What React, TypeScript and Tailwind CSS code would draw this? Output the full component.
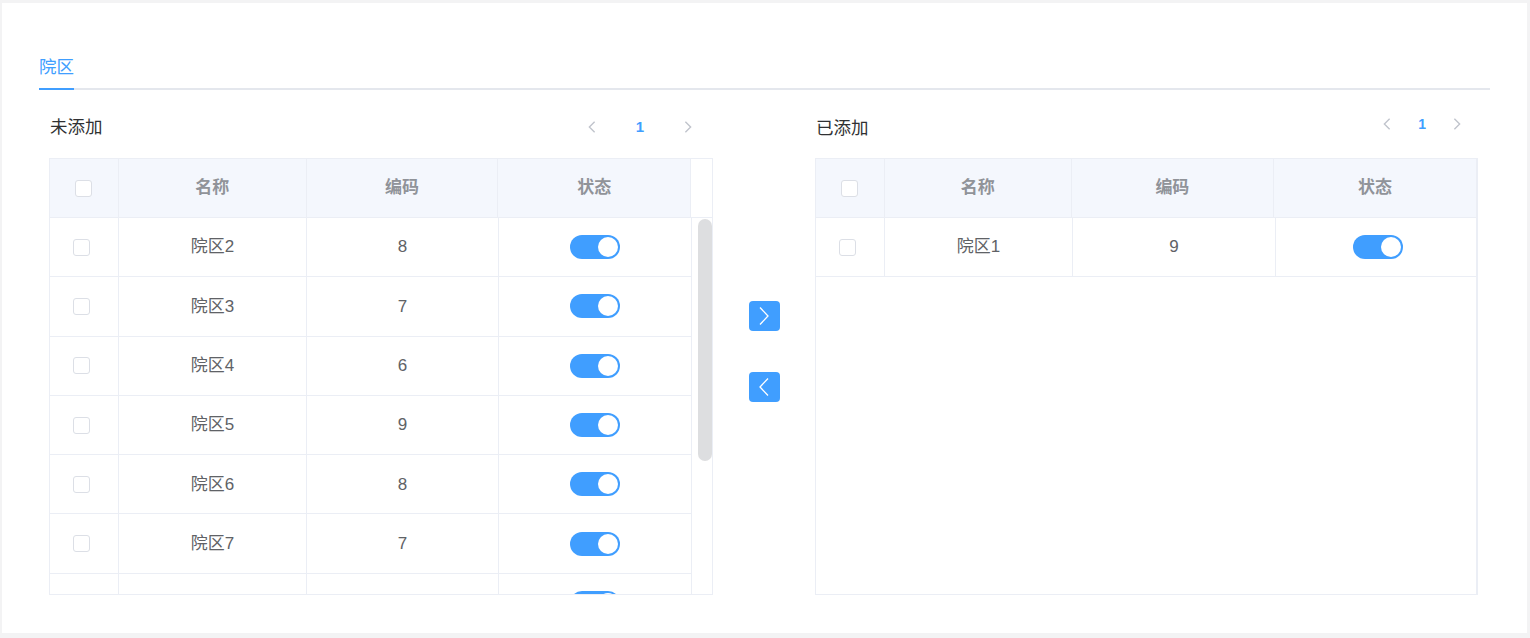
import React from 'react';

const font = { fontFamily: '"Liberation Sans", "Noto Sans CJK SC", sans-serif' };

type Row = { name: string; code: string };

// last row is mostly hidden under the bottom edge, only its checkbox / switch tops peek out
const unadded: Row[] = [
  { name: '院区2', code: '8' },
  { name: '院区3', code: '7' },
  { name: '院区4', code: '6' },
  { name: '院区5', code: '9' },
  { name: '院区6', code: '8' },
  { name: '院区7', code: '7' },
  { name: '', code: '' },
];

const added: Row[] = [{ name: '院区1', code: '9' }];

function Checkbox() {
  return <span className="inline-block w-[17px] h-[17px] border border-[#dcdfe6] rounded-[3px] bg-white" />;
}

function Switch() {
  return (
    <span className="inline-flex items-center justify-end w-[50px] h-[24px] rounded-full bg-[#409eff] px-[2px]">
      <span className="w-[20px] h-[20px] rounded-full bg-white" />
    </span>
  );
}

function Chevron({ dir, className, sw = 1.4 }: { dir: 'left' | 'right'; className?: string; sw?: number }) {
  return (
    <svg viewBox="0 0 16 16" className={className} fill="none" stroke="currentColor" strokeWidth={sw}>
      {dir === 'left' ? <path d="M11 2 L5 8 L11 14" /> : <path d="M5 2 L11 8 L5 14" />}
    </svg>
  );
}

function Pager({ small }: { small?: boolean }) {
  return (
    <div className={`flex items-center text-[#c0c4cc] ${small ? 'gap-[24px]' : 'gap-[37px]'}`}>
      <Chevron dir="left" className="w-[14px] h-[14px]" sw={1.6} />
      <span className={`text-[#409eff] font-bold ${small ? 'text-[14px]' : 'text-[15px]'}`}>1</span>
      <Chevron dir="right" className="w-[14px] h-[14px]" sw={1.6} />
    </div>
  );
}

function DataTable({ rows, cols, gutter }: { rows: Row[]; cols: number[]; gutter?: boolean }) {
  const total = cols.reduce((a, b) => a + b, 0) + (gutter ? 22 : 0);
  return (
    <div
      className={`relative border border-[#ebeef5] h-[437px] overflow-hidden ${gutter ? '' : 'border-r-2'}`}
      style={{ width: total }}
    >
      <div className="flex h-[59px] bg-[#f4f7fd] border-b border-[#ebeef5] text-[#909399] font-bold text-[17px]">
        <div className="flex items-center justify-center border-r border-[#ebeef5]" style={{ width: cols[0] }}>
          <Checkbox />
        </div>
        {['名称', '编码', '状态'].map((t, i) => (
          <div
            key={t}
            className={`flex items-center justify-center ${i < 2 || gutter ? 'border-r border-[#ebeef5]' : ''}`}
            style={{ width: cols[i + 1] }}
          >
            {t}
          </div>
        ))}
        {gutter && <div className="bg-white w-[21px]" />}
      </div>
      <div className="flex">
        <div>
          {rows.map((r, idx) => (
            <div key={idx} className="flex h-[59.3px] border-b border-[#ebeef5] text-[#606266] text-[17px]">
              <div className="flex items-center justify-center pr-[6px] border-r border-[#ebeef5]" style={{ width: cols[0] }}>
                <Checkbox />
              </div>
              <div className="flex items-center justify-center border-r border-[#ebeef5]" style={{ width: cols[1] }}>
                {r.name}
              </div>
              <div className="flex items-center justify-center border-r border-[#ebeef5]" style={{ width: cols[2] }}>
                {r.code}
              </div>
              <div className={`flex items-center justify-center ${gutter ? 'border-r border-[#ebeef5]' : ''}`} style={{ width: cols[3] }}>
                <Switch />
              </div>
            </div>
          ))}
        </div>
        {gutter && (
          <div className="w-[21px] pl-[6px] pt-[1px]">
            <div className="w-[14px] h-[242px] rounded-full bg-[#dddee0]" />
          </div>
        )}
      </div>
    </div>
  );
}

export default function App() {
  return (
    <div className="w-[1530px] h-[638px] bg-[#f3f3f4] pt-[3px] pl-[2px] pr-[3px] pb-[5px]" style={font}>
      <div className="h-full bg-white px-[37px]">
        {/* tabs */}
        <div className="pt-[44px] border-b-2 border-[#e4e7ed] flex">
          <div className="relative text-[17.5px] text-[#409eff] leading-[40px] h-[41px] w-[35px]">
            院区
            <span className="absolute left-0 right-0 -bottom-[2px] h-[2px] bg-[#409eff]" />
          </div>
        </div>

        <div className="flex px-[10px] mt-[19px]">
          {/* left */}
          <div className="w-[664px]">
            <div className="flex items-center justify-between h-[36px] mb-[13px] pl-[1px] pr-[18px]">
              <span className="text-[17.5px] text-[#303133]">未添加</span>
              <Pager />
            </div>
            <DataTable rows={unadded} cols={[69, 188, 192, 193]} gutter />
          </div>

          {/* transfer buttons */}
          <div className="w-[102px] flex flex-col items-center pt-[192px] gap-[41px]">
            <button className="w-[31px] h-[30px] rounded-[4px] bg-[#409eff] text-white flex items-center justify-center">
              <svg viewBox="0 0 20 20" className="w-[20px] h-[20px]" fill="none" stroke="currentColor" strokeWidth="1.3">
                <path d="M6 1.5 L14 10 L6 18.5" />
              </svg>
            </button>
            <button className="w-[31px] h-[30px] rounded-[4px] bg-[#409eff] text-white flex items-center justify-center">
              <svg viewBox="0 0 20 20" className="w-[20px] h-[20px]" fill="none" stroke="currentColor" strokeWidth="1.3">
                <path d="M14 1.5 L6 10 L14 18.5" />
              </svg>
            </button>
          </div>

          {/* right */}
          <div className="w-[663px]">
            <div className="flex items-center justify-between h-[36px] mb-[13px] pl-[1px] pr-[14px]">
              <span className="text-[17.5px] text-[#303133] mt-[2px]">已添加</span>
              <div className="-mt-[6px]">
                <Pager small />
              </div>
            </div>
            <DataTable rows={added} cols={[69, 188, 203, 203]} />
          </div>
        </div>
      </div>
    </div>
  );
}
